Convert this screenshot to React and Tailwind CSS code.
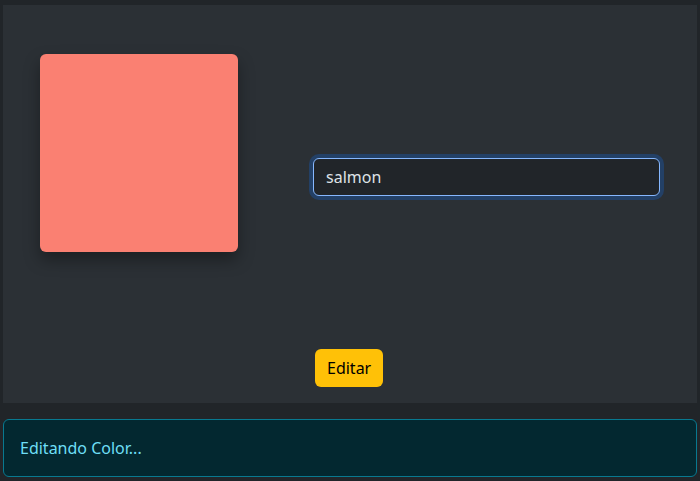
import { useState } from "react";

export default function App() {
    const [color, setColor] = useState("salmon");

    return (
        <div
            className="w-[700px] h-[481px] bg-[#212529] text-[#dee2e6] pt-[5px] px-[3px]"
            style={{ fontFamily: '"Noto Sans", "Open Sans", sans-serif' }}
        >
            {/* Panel */}
            <div className="h-[398px] bg-[#2b3035] flex flex-col">
                <div className="flex">
                    <div className="ml-[37px] mt-[49px] w-[198px] h-[198px] rounded-[6px] bg-[#fa8072] shadow-[0_8px_16px_rgba(0,0,0,0.35)]"
                        style={{ backgroundColor: color }} />
                    <div className="ml-[75px] mt-[153px] w-[347px]">
                        <input
                            value={color}
                            onChange={(e) => setColor(e.target.value)}
                            className="w-full h-[38px] px-3 rounded-[6px] bg-[#212529] border border-[#86b7fe] text-[#dee2e6] text-base outline-none ring-4 ring-[#0d6efd]/25"
                        />
                    </div>
                </div>
                <div className="mt-[97px] ml-[312px]">
                    <button className="h-[38px] px-3 rounded-[6px] bg-[#ffc107] text-black text-base">
                        Editar
                    </button>
                </div>
            </div>

            {/* Alert */}
            <div className="mt-[16px] h-[58px] flex items-center px-4 rounded-[6px] border border-[#087990] bg-[#032830] text-[#6edff6] text-base">
                Editando Color...
            </div>
        </div>
    );
}
